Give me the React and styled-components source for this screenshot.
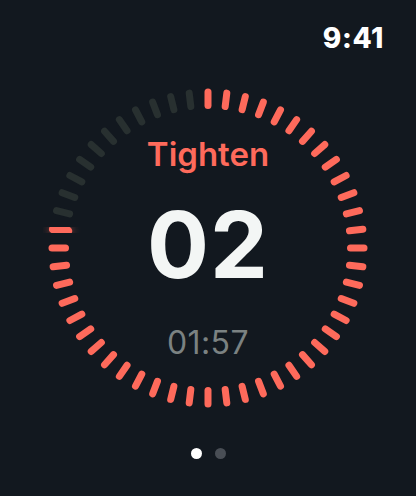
import React from "react";
import styled, { createGlobalStyle } from "styled-components";

const GlobalStyle = createGlobalStyle`
  html, body { margin: 0; padding: 0; background: #12181f; }
  * { box-sizing: border-box; }
`;

const Screen = styled.div`
  width: 416px;
  height: 496px;
  background: #12181f;
  display: flex;
  flex-direction: column;
  align-items: center;
  font-family: Inter, "Noto Sans", sans-serif;
  overflow: hidden;
`;

const StatusBar = styled.div`
  align-self: stretch;
  height: 83px;
  padding: 24px 32px 0;
  display: flex;
  justify-content: flex-end;
  align-items: flex-start;
`;

const Clock = styled.span`
  color: #ffffff;
  font-size: 28px;
  line-height: 28px;
  font-weight: 800;
  letter-spacing: 0.6px;
`;

const Dial = styled.div`
  display: grid;
  width: 330px;
  height: 330px;
  & > * { grid-area: 1 / 1; }
`;

const Ring = styled.svg`
  width: 330px;
  height: 330px;
  display: block;
`;

const Readout = styled.div`
  display: flex;
  flex-direction: column;
  align-items: center;
  padding-top: 55px;
`;

const Phase = styled.div`
  color: #fe6a5b;
  font-size: 33px;
  line-height: 33px;
  font-weight: 600;
`;

const Count = styled.div`
  margin-top: 28px;
  color: #f3f6f5;
  font-size: 92px;
  line-height: 92px;
  font-weight: 700;
  letter-spacing: 1px;
`;

const Remaining = styled.div`
  margin-top: 36px;
  color: #7b8282;
  font-size: 32px;
  line-height: 32px;
  font-weight: 400;
  letter-spacing: 0.4px;
`;

const Pager = styled.div`
  margin-top: 35px;
  display: flex;
  gap: 13px;
`;

const Dot = styled.span`
  width: 11px;
  height: 11px;
  border-radius: 50%;
  background: ${(p) => (p.$active ? "#ffffff" : "#494e55")};
`;

const TOTAL = 52;
const ACTIVE = 40;
const C = 165;

function Ticks() {
  const items = [];
  for (let i = 0; i < TOTAL; i++) {
    const a = (i * 2 * Math.PI) / TOTAL;
    const current = i === ACTIVE;
    const r1 = current ? 141 : 142.5;
    const r2 = 156;
    const x1 = C + r1 * Math.sin(a);
    const y1 = C - r1 * Math.cos(a);
    const x2 = C + r2 * Math.sin(a);
    const y2 = C - r2 * Math.cos(a);
    items.push(
      <line
        key={i}
        x1={x1}
        y1={y1}
        x2={x2}
        y2={y2}
        stroke={i <= ACTIVE ? "#fe6a5b" : "#283030"}
        strokeWidth={current ? 8.5 : 7}
        strokeLinecap="round"
        filter={current ? "url(#glow)" : undefined}
      />
    );
  }
  return items;
}

export default function App() {
  return (
    <>
      <GlobalStyle />
      <Screen>
        <StatusBar>
          <Clock>9:41</Clock>
        </StatusBar>
        <Dial>
          <Ring viewBox="0 0 330 330">
            <defs>
              <filter id="glow" x="-100%" y="-100%" width="300%" height="300%">
                <feGaussianBlur in="SourceGraphic" stdDeviation="4" result="b" />
                <feComponentTransfer in="b" result="bf">
                  <feFuncA type="linear" slope="0.55" />
                </feComponentTransfer>
                <feMerge>
                  <feMergeNode in="bf" />
                  <feMergeNode in="SourceGraphic" />
                </feMerge>
              </filter>
            </defs>
            <Ticks />
          </Ring>
          <Readout>
            <Phase>Tighten</Phase>
            <Count>02</Count>
            <Remaining>01:57</Remaining>
          </Readout>
        </Dial>
        <Pager>
          <Dot $active />
          <Dot />
        </Pager>
      </Screen>
    </>
  );
}
